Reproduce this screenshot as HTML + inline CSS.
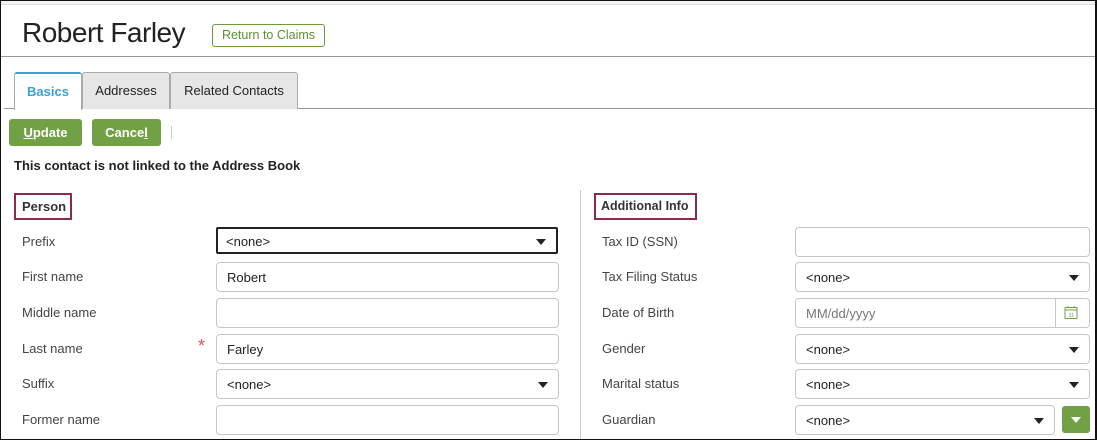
<!DOCTYPE html><html><head><style>
*{box-sizing:border-box}body{margin:0;width:1097px;height:440px;overflow:hidden;font-family:"Liberation Sans",sans-serif;background:#fff;color:#222}
.frame{position:absolute;left:0;top:0;width:1097px;height:440px;border:1px solid #111;border-right-width:2px}
.a{position:absolute}
.lbl{position:absolute;font-size:13px;color:#444}
.in{position:absolute;height:30px;border:1px solid #c3c6cc;border-radius:4px;font-size:13px;padding:7px 10px;color:#222;background:#fff}
.arr{position:absolute;right:10px;top:12px;width:0;height:0;border-left:5px solid transparent;border-right:5px solid transparent;border-top:6px solid #222}
.btn{position:absolute;background:#72a044;color:#fff;font-weight:bold;font-size:13px;border-radius:3px;text-align:center;line-height:27px}
.tab{position:absolute;top:72px;height:37px;border:1px solid #aaa;border-bottom:none;background:#e6e6e6;font-size:13px;text-align:center;line-height:36px;border-radius:3px 3px 0 0}
</style></head><body>
<div class="a" style="left:0;top:0;width:1097px;height:5px;background:#f3f3f3;border-bottom:1px solid #ddd"></div>
<div class="a" style="left:22px;top:17px;font-size:28px;color:#222;letter-spacing:-0.5px">Robert Farley</div>
<div class="a" style="left:212px;top:24px;width:113px;height:23px;border:1px solid #6a9a3a;border-radius:3px;color:#5f8f35;font-size:12.5px;text-align:center;line-height:21px;white-space:nowrap">Return to Claims</div>
<div class="a" style="left:0;top:56px;width:1097px;height:1px;background:#999"></div>
<div class="a" style="left:4px;top:108px;width:1093px;height:1px;background:#999"></div>
<div class="tab" style="left:14px;width:68px;background:#fff;border-top:2px solid #3aa0d8;color:#3aa0d8;font-weight:bold;height:38px">Basics</div>
<div class="tab" style="left:82px;width:88px">Addresses</div>
<div class="tab" style="left:170px;width:128px">Related Contacts</div>
<div class="btn" style="left:9px;top:119px;width:73px;height:27px"><u>U</u>pdate</div>
<div class="btn" style="left:92px;top:119px;width:69px;height:27px">Cance<u>l</u></div>
<div class="a" style="left:171px;top:126px;width:1px;height:13px;background:#ccc"></div>
<div class="a" style="left:14px;top:158px;font-size:13px;font-weight:bold">This contact is not linked to the Address Book</div>
<div class="a" style="left:14px;top:193px;width:58px;height:27px;border:2px solid #8b2a4a;font-size:13px;font-weight:bold;padding:4px 6px;color:#333">Person</div>
<div class="a" style="left:594px;top:193px;width:103px;height:27px;border:2px solid #8b2a4a;font-size:12.5px;font-weight:bold;padding:4px 5px;color:#333;white-space:nowrap">Additional Info</div>
<div class="a" style="left:580px;top:190px;width:1px;height:250px;background:#ccc"></div>
<div class="lbl" style="left:22px;top:234px">Prefix</div>
<div class="lbl" style="left:22px;top:269px">First name</div>
<div class="lbl" style="left:22px;top:305px">Middle name</div>
<div class="lbl" style="left:22px;top:341px">Last name</div>
<div class="lbl" style="left:22px;top:376px">Suffix</div>
<div class="lbl" style="left:22px;top:412px">Former name</div>
<div class="a" style="left:198px;top:336px;color:#d9534f;font-size:18px">*</div>
<div class="in" style="left:216px;top:227px;width:342px;height:27px;border:2px solid #222;border-radius:2px;padding:5px 8px">&lt;none&gt;<span class="arr" style="top:10px"></span></div>
<div class="in" style="left:216px;top:262px;width:343px">Robert</div>
<div class="in" style="left:216px;top:298px;width:343px"></div>
<div class="in" style="left:216px;top:334px;width:343px">Farley</div>
<div class="in" style="left:216px;top:369px;width:343px">&lt;none&gt;<span class="arr"></span></div>
<div class="in" style="left:216px;top:405px;width:343px"></div>
<div class="lbl" style="left:602px;top:234px">Tax ID (SSN)</div>
<div class="lbl" style="left:602px;top:269px">Tax Filing Status</div>
<div class="lbl" style="left:602px;top:305px">Date of Birth</div>
<div class="lbl" style="left:602px;top:341px">Gender</div>
<div class="lbl" style="left:602px;top:376px">Marital status</div>
<div class="lbl" style="left:602px;top:412px">Guardian</div>
<div class="in" style="left:795px;top:227px;width:295px"></div>
<div class="in" style="left:795px;top:262px;width:295px">&lt;none&gt;<span class="arr"></span></div>
<div class="in" style="left:795px;top:298px;width:295px;color:#777">MM/dd/yyyy<span class="a" style="left:259px;top:0;width:1px;height:28px;background:#c3c6cc"></span>
<svg class="a" style="left:268px;top:6px" width="14" height="15" viewBox="0 0 14 15"><rect x="1" y="2.5" width="12" height="11" fill="none" stroke="#72a044"/><line x1="1" y1="5" x2="13" y2="5" stroke="#72a044"/><line x1="4" y1="1" x2="4" y2="3" stroke="#72a044"/><line x1="10" y1="1" x2="10" y2="3" stroke="#72a044"/><text x="4.5" y="12" font-size="5" fill="#72a044">31</text></svg></div>
<div class="in" style="left:795px;top:334px;width:295px">&lt;none&gt;<span class="arr"></span></div>
<div class="in" style="left:795px;top:369px;width:295px">&lt;none&gt;<span class="arr"></span></div>
<div class="in" style="left:795px;top:405px;width:260px">&lt;none&gt;<span class="arr"></span></div>
<div class="btn" style="left:1062px;top:406px;width:28px;height:27px"><span class="arr" style="right:9px;top:11px;border-top-color:#fff"></span></div>
<div class="frame"></div>
</body></html>
